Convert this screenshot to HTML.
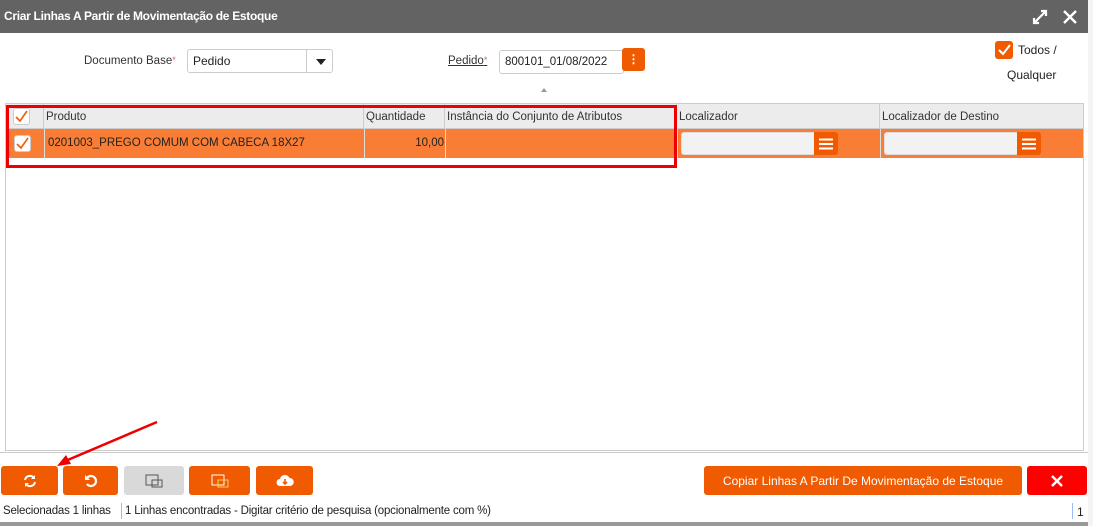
<!DOCTYPE html>
<html><head><meta charset="utf-8"><style>
*{box-sizing:border-box;margin:0;padding:0}
body{width:1093px;height:526px;background:#fff;font-family:"Liberation Sans",sans-serif;font-size:12px;color:#222;position:relative;overflow:hidden}
.a{position:absolute}
.title{left:0;top:0;width:1088px;height:33px;background:#636363;color:#fff;font-weight:bold;font-size:12px;line-height:33px;padding-left:4px;letter-spacing:-0.3px}
.btn{position:absolute;top:466px;height:29px;background:#f05a00;border-radius:3px;display:flex;align-items:center;justify-content:center;color:#fff}
.cb{position:absolute;width:17px;height:17px;background:#fff;border:1px solid #ccc;border-radius:3px}
.hd{position:absolute;top:104px;height:24px;line-height:26px;color:#333;border-right:1px solid #ccc;padding-left:2px;font-size:11.5px}
.in{position:absolute;top:132px;height:23px;background:#f2f2f2;border:1px solid #ddd;border-radius:3px}
.ib{position:absolute;top:132px;width:24px;height:23px;background:#f05a00;border-radius:0 3px 3px 0;display:flex;align-items:center;justify-content:center}
</style></head><body>
<div class="a title">Criar Linhas A Partir de Movimentação de Estoque</div>
<svg class="a" style="left:1032px;top:9px" width="16" height="16" viewBox="0 0 16 16"><path d="M2 14L14 2M9 2h5v5M2 9v5h5" stroke="#fff" stroke-width="2.2" fill="none"/></svg>
<svg class="a" style="left:1063px;top:10px" width="14" height="14" viewBox="0 0 14 14"><path d="M1 1L13 13M13 1L1 13" stroke="#fff" stroke-width="2.4"/></svg>
<div class="a" style="left:1088px;top:0;width:5px;height:526px;background:#f4f4f4"></div>

<div class="a" style="left:84px;top:55px;color:#333;font-size:11.5px">Documento Base<span style="color:#e55;font-size:9px;vertical-align:top">*</span></div>
<div class="a" style="left:187px;top:49px;width:146px;height:24px;border:1px solid #ccc;border-radius:3px;line-height:23px;padding-left:5px">Pedido<div class="a" style="left:118px;top:0;width:1px;height:22px;background:#ccc"></div><div class="a" style="left:128px;top:9px;border-left:5px solid transparent;border-right:5px solid transparent;border-top:6px solid #222"></div></div>
<div class="a" style="left:448px;top:55px;text-decoration:underline;color:#333;font-size:11.5px">Pedido<span style="color:#e55;font-size:9px;vertical-align:top;text-decoration:none">*</span></div>
<div class="a" style="left:499px;top:50px;width:125px;height:24px;border:1px solid #ccc;border-radius:3px;line-height:23px;padding-left:5px;font-size:11.5px">800101_01/08/2022</div>
<div class="a" style="left:622px;top:48px;width:23px;height:23px;background:#f05a00;border-radius:3px;color:#fff;text-align:center;font-weight:bold;line-height:22px">⋮</div>
<div class="a" style="left:541px;top:88px;border-left:3px solid transparent;border-right:3px solid transparent;border-bottom:4px solid #999"></div>
<div class="a" style="left:995px;top:41px;width:18px;height:18px;background:#f05a00;border-radius:3px"><svg width="18" height="18"><path d="M4 9l4 4 7-9" stroke="#fff" stroke-width="2" fill="none"/></svg></div>
<div class="a" style="left:1018px;top:43px">Todos /</div>
<div class="a" style="left:1007px;top:68px">Qualquer</div>

<div class="a" style="left:5px;top:103px;width:1079px;height:348px;border:1px solid #ccc"></div>
<div class="a" style="left:6px;top:104px;width:1077px;height:25px;background:#ececec;border-bottom:1px solid #ccc"></div>
<div class="hd" style="left:6px;width:38px"></div>
<div class="hd" style="left:44px;width:320px">Produto</div>
<div class="hd" style="left:364px;width:81px">Quantidade</div>
<div class="hd" style="left:445px;width:232px">Instância do Conjunto de Atributos</div>
<div class="hd" style="left:677px;width:203px">Localizador</div>
<div class="hd" style="left:880px;width:203px;border-right:none">Localizador de Destino</div>
<div class="cb" style="left:13px;top:108px"><svg width="15" height="15"><path d="M2 8l4 4 7-10" stroke="#f05a00" stroke-width="1.6" fill="none"/></svg></div>
<div class="a" style="left:6px;top:129px;width:1077px;height:29px;background:#f97d34"></div>
<div class="a" style="left:44px;top:129px;width:1px;height:29px;background:#ddd"></div>
<div class="a" style="left:364px;top:129px;width:1px;height:29px;background:#ddd"></div>
<div class="a" style="left:445px;top:129px;width:1px;height:29px;background:#ddd"></div>
<div class="a" style="left:677px;top:129px;width:1px;height:29px;background:#ddd"></div>
<div class="a" style="left:880px;top:129px;width:1px;height:29px;background:#ddd"></div>
<div class="cb" style="left:14px;top:135px"><svg width="15" height="15"><path d="M2 8l4 4 7-10" stroke="#f05a00" stroke-width="1.6" fill="none"/></svg></div>
<div class="a" style="left:48px;top:137px;color:#222;font-size:11.5px">0201003_PREGO COMUM COM CABECA 18X27</div>
<div class="a" style="left:364px;top:137px;width:80px;text-align:right;color:#222;font-size:11.5px">10,00</div>
<div class="in" style="left:681px;width:135px"></div>
<div class="ib" style="left:814px"><svg width="14" height="12"><path d="M0 1.5h14M0 6h14M0 10.5h14" stroke="#fff" stroke-width="2"/></svg></div>
<div class="in" style="left:884px;width:135px"></div>
<div class="ib" style="left:1017px"><svg width="14" height="12"><path d="M0 1.5h14M0 6h14M0 10.5h14" stroke="#fff" stroke-width="2"/></svg></div>
<div class="a" style="left:6px;top:105px;width:671px;height:63px;border:3px solid #e00"></div>

<div class="a" style="left:0;top:452px;width:1088px;height:1px;background:#ccc"></div>
<div class="btn" style="left:1px;width:57px"><svg width="14" height="14" viewBox="0 0 14 14"><path d="M2 6a5 5 0 0 1 9-2M12 8a5 5 0 0 1-9 2" stroke="#fff" stroke-width="2" fill="none"/><path d="M12 1v4H8zM2 13V9h4z" fill="#fff"/></svg></div>
<div class="btn" style="left:63px;width:55px"><svg width="14" height="14" viewBox="0 0 14 14"><path d="M3 4a5 5 0 1 1 0 6" stroke="#fff" stroke-width="2.2" fill="none"/><path d="M1 1v5h5z" fill="#fff"/></svg></div>
<div class="btn" style="left:124px;width:60px;background:#d9d9d9"><svg width="20" height="16"><rect x="2" y="2" width="12" height="10" fill="none" stroke="#555"/><rect x="8" y="7" width="10" height="7" fill="none" stroke="#555"/></svg></div>
<div class="btn" style="left:189px;width:61px"><svg width="20" height="16"><rect x="2" y="2" width="12" height="10" fill="none" stroke="#fff"/><rect x="8" y="7" width="10" height="7" fill="none" stroke="#fc6"/></svg></div>
<div class="btn" style="left:256px;width:57px"><svg width="18" height="14" viewBox="0 0 18 14"><path d="M4 12a3.5 3.5 0 0 1 0-7 5 5 0 0 1 9.5-1A4 4 0 0 1 14 12z" fill="#fff"/><path d="M9 5v4M7 8l2 2 2-2" stroke="#f05a00" stroke-width="1.6" fill="none"/></svg></div>
<svg class="a" style="left:55px;top:418px" width="105" height="50"><path d="M102 4L8 44" stroke="#e00" stroke-width="2.5"/><path d="M2 48l14-2-5-9z" fill="#e00"/></svg>
<div class="btn" style="left:704px;width:318px;font-size:12px">Copiar Linhas A Partir De Movimentação de Estoque</div>
<div class="btn" style="left:1027px;width:60px;background:#f00"><svg width="12" height="12"><path d="M1 1L11 11M11 1L1 11" stroke="#fff" stroke-width="2.4"/></svg></div>

<div class="a" style="left:3px;top:505px;color:#222;font-size:11.5px;letter-spacing:-0.2px">Selecionadas 1 linhas</div>
<div class="a" style="left:121px;top:503px;width:1px;height:16px;background:#9bf"></div>
<div class="a" style="left:125px;top:505px;color:#222;font-size:11.5px;letter-spacing:-0.2px">1 Linhas encontradas - Digitar critério de pesquisa (opcionalmente com %)</div>
<div class="a" style="left:1072px;top:503px;width:1px;height:16px;background:#9bf"></div>
<div class="a" style="left:1077px;top:505px;color:#222">1</div>
<div class="a" style="left:0;top:522px;width:1088px;height:4px;background:#999"></div>
</body></html>
